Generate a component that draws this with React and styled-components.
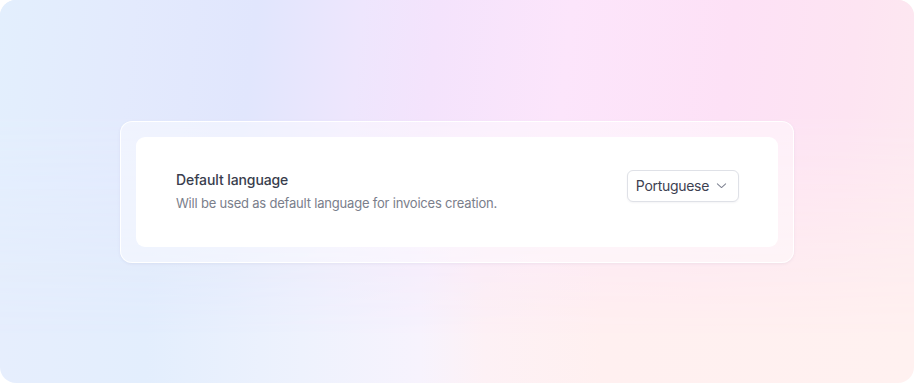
import React from "react";
import styled, { createGlobalStyle } from "styled-components";

const Global = createGlobalStyle`
  html, body { margin: 0; padding: 0; background: #ffffff; }
  body { font-family: Inter, "Noto Sans", sans-serif; -webkit-font-smoothing: antialiased; }
`;

const Frame = styled.div`
  position: relative;
  isolation: isolate;
  width: 914px;
  height: 383px;
  border-radius: 16px;
  overflow: hidden;
  box-sizing: border-box;
  display: flex;
  align-items: center;
  justify-content: center;
  background: linear-gradient(90deg,
    #e6eefd 0%, #e3eefd 16%, #eef2fd 33%, #f7f3fd 46%, #fdf1f5 53%, #fff0f0 66%, #fff1f0 100%);

  &::before {
    content: "";
    position: absolute;
    inset: 0;
    z-index: -1;
    background: linear-gradient(96deg,
      #e3effd 0%, #e3eafd 14%, #e1e6fd 27%, #eee6fd 38%, #f4e3fc 46%,
      #fce5fb 60%, #fde1f6 77%, #fde4f2 90%, #fde9f0 100%);
    -webkit-mask-image: linear-gradient(to bottom, #000 0%, #000 30%, transparent 88%);
    mask-image: linear-gradient(to bottom, #000 0%, #000 30%, transparent 88%);
  }
`;

const Shell = styled.div`
  width: 674px;
  box-sizing: border-box;
  padding: 15px;
  border-radius: 12px;
  background: rgba(255, 255, 255, 0.45);
  border: 1px solid rgba(255, 255, 255, 0.95);
  box-shadow: 0 1px 3px rgba(120, 110, 160, 0.10);
`;

const Card = styled.div`
  background: #ffffff;
  border-radius: 9px;
  height: 110px;
  box-sizing: border-box;
  padding: 33px 39px 0 40px;
  display: flex;
  justify-content: space-between;
  align-items: flex-start;
`;

const TextBlock = styled.div`
  display: flex;
  flex-direction: column;
  gap: 3px;
`;

const Title = styled.div`
  font-size: 14px;
  line-height: 20px;
  font-weight: 500;
  letter-spacing: -0.1px;
  color: #393d4d;
`;

const Subtitle = styled.div`
  font-size: 13px;
  line-height: 20px;
  font-weight: 400;
  letter-spacing: -0.2px;
  color: #7a7e8b;
`;

const Select = styled.button`
  display: flex;
  align-items: center;
  gap: 7px;
  height: 32px;
  box-sizing: border-box;
  padding: 0 11px 0 8px;
  border: 1px solid #dfe1e7;
  border-radius: 6px;
  background: #ffffff;
  box-shadow: 0 1px 2px rgba(30, 40, 70, 0.05);
  font-family: Inter, "Noto Sans", sans-serif;
  font-size: 14px;
  letter-spacing: -0.3px;
  color: #3d4151;
  cursor: pointer;
`;

const Chevron = () => (
  <svg width="11" height="11" viewBox="0 0 12 12" fill="none">
    <path d="M1.5 4.2 L6 8.2 L10.5 4.2" stroke="#7d8190" strokeWidth="1.1" strokeLinecap="round" strokeLinejoin="round" />
  </svg>
);

export default function App() {
  return (
    <>
      <Global />
      <Frame>
        <Shell>
          <Card>
            <TextBlock>
              <Title>Default language</Title>
              <Subtitle>Will be used as default language for invoices creation.</Subtitle>
            </TextBlock>
            <Select>
              Portuguese
              <Chevron />
            </Select>
          </Card>
        </Shell>
      </Frame>
    </>
  );
}
